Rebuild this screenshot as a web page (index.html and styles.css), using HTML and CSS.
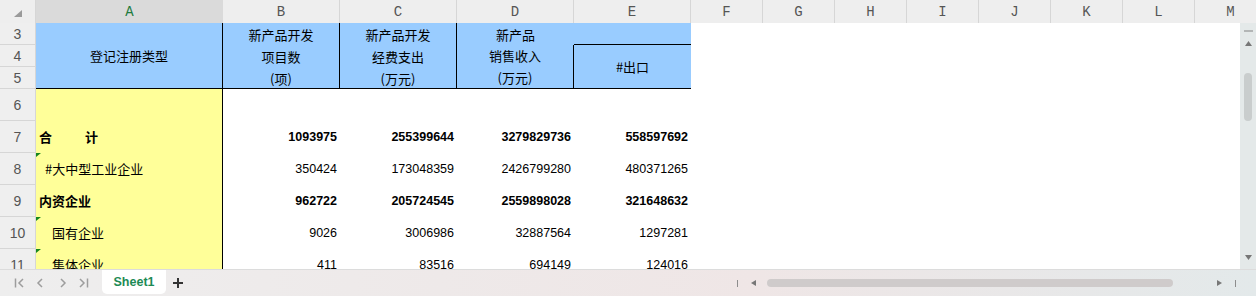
FILE: index.html
```html
<!DOCTYPE html>
<html lang="zh-CN">
<head>
  <meta charset="UTF-8">
  <title>Sheet1</title>
  <link rel="stylesheet" href="styles.css">
</head>
<body>
<div class="sheet">

  <!-- column letters -->
  <div class="colhead">
    <div class="corner">
      <svg width="8" height="7" viewBox="0 0 8 7"><polygon points="8,0 8,7 0,7" fill="#9a9a9a"/></svg>
    </div>
    <div class="ch sel">A</div>
    <div class="ch">B</div>
    <div class="ch">C</div>
    <div class="ch">D</div>
    <div class="ch">E</div>
    <div class="ch">F</div>
    <div class="ch">G</div>
    <div class="ch">H</div>
    <div class="ch">I</div>
    <div class="ch">J</div>
    <div class="ch">K</div>
    <div class="ch">L</div>
    <div class="ch">M</div>
  </div>

  <div class="main">
    <div class="cells">

      <!-- rows 3-5: table head -->
      <div class="hdrblock">
        <div class="rh r3">3</div>
        <div class="rh r4">4</div>
        <div class="rh r5">5</div>
        <div class="hc colA">登记注册类型</div>
        <div class="hc colB"><span>新产品开发</span><span>项目数</span><span>(项)</span></div>
        <div class="hc colC"><span>新产品开发</span><span>经费支出</span><span>(万元)</span></div>
        <div class="hc colD3"><span>新产品</span></div>
        <div class="hc colD45"><span>销售收入</span><span>(万元)</span></div>
        <div class="hc colE3"></div>
        <div class="hc colE45">#出口</div>
      </div>

      <div class="row">
        <div class="rh">6</div>
        <div class="ca"></div>
      </div>
      <div class="row bold">
        <div class="rh">7</div>
        <div class="ca"><span class="he">合</span>计</div>
        <div class="num">1093975</div>
        <div class="num">255399644</div>
        <div class="num">3279829736</div>
        <div class="num">558597692</div>
      </div>
      <div class="row">
        <div class="rh">8</div>
        <div class="ca mark ind1">#大中型工业企业</div>
        <div class="num">350424</div>
        <div class="num">173048359</div>
        <div class="num">2426799280</div>
        <div class="num">480371265</div>
      </div>
      <div class="row bold">
        <div class="rh">9</div>
        <div class="ca">内资企业</div>
        <div class="num">962722</div>
        <div class="num">205724545</div>
        <div class="num">2559898028</div>
        <div class="num">321648632</div>
      </div>
      <div class="row">
        <div class="rh">10</div>
        <div class="ca mark ind2">国有企业</div>
        <div class="num">9026</div>
        <div class="num">3006986</div>
        <div class="num">32887564</div>
        <div class="num">1297281</div>
      </div>
      <div class="row">
        <div class="rh">11</div>
        <div class="ca mark ind2">集体企业</div>
        <div class="num">411</div>
        <div class="num">83516</div>
        <div class="num">694149</div>
        <div class="num">124016</div>
      </div>
    </div>

    <!-- vertical scrollbar -->
    <div class="vscroll">
      <div class="dash"></div>
      <svg class="up" width="7" height="5" viewBox="0 0 7 5"><polygon points="3.5,0 7,5 0,5" fill="#777"/></svg>
      <div class="vthumb"></div>
      <svg class="down" width="7" height="5" viewBox="0 0 7 5"><polygon points="0,0 7,0 3.5,5" fill="#777"/></svg>
    </div>
  </div>

  <!-- sheet tabs + horizontal scrollbar -->
  <div class="bottombar">
    <svg class="nav" width="102" height="26" viewBox="0 0 102 26" fill="none" stroke="#9d9d9d" stroke-width="1.5">
      <line x1="15.5" y1="8.5" x2="15.5" y2="17.5"/>
      <polyline points="23,9 19,13 23,17"/>
      <polyline points="42,9 38,13 42,17"/>
      <polyline points="61,9 65,13 61,17"/>
      <polyline points="80,9 84,13 80,17"/>
      <line x1="87.5" y1="8.5" x2="87.5" y2="17.5"/>
    </svg>
    <div class="tab">Sheet1</div>
    <svg class="plus" width="10" height="10" viewBox="0 0 10 10" stroke="#333" stroke-width="2">
      <line x1="0" y1="5" x2="10" y2="5"/>
      <line x1="5" y1="0" x2="5" y2="10"/>
    </svg>
    <div class="hbar">
      <div class="tick"></div>
      <svg class="larr" width="5" height="6" viewBox="0 0 5 6"><polygon points="5,0 5,6 0,3" fill="#777"/></svg>
      <div class="hthumb"></div>
      <svg class="rarr" width="5" height="6" viewBox="0 0 5 6"><polygon points="0,0 5,3 0,6" fill="#777"/></svg>
      <div class="tick end"></div>
    </div>
  </div>

</div>
</body>
</html>
```

FILE: styles.css
```css
:root {
  --cols: 36px 187px 117px 117px 117px 117px repeat(8, 72px);
}

* {
  box-sizing: border-box;
}

body {
  margin: 0;
  width: 1256px;
  height: 296px;
  overflow: hidden;
  background: #fff;
  font-family: "Noto Sans CJK SC", sans-serif;
  color: #000;
}

.sheet {
  display: flex;
  flex-direction: column;
  height: 296px;
}

/* column header */
.colhead {
  display: grid;
  grid-template-columns: var(--cols);
  height: 23px;
  flex-shrink: 0;
  overflow: hidden;
  background: #eeeeee;
}

.corner,
.ch {
  border-right: 1px solid #d6d6d6;
  border-bottom: 1px solid #d4d4d4;
}

.corner {
  display: flex;
  align-items: center;
  justify-content: center;
  padding-top: 2px;
}

.ch {
  text-align: center;
  font-family: "Liberation Mono", monospace;
  font-size: 14px;
  line-height: 24px;
  color: #555;
}

.ch.sel {
  background: #dadada;
  color: #1e7b3e;
  border-bottom: 2px solid #3a8c2c;
  border-right: none;
}

/* cells */
.main {
  display: flex;
  height: 246px;
  flex-shrink: 0;
}

.cells {
  flex: 1;
  min-width: 0;
  overflow: hidden;
}

.hdrblock {
  display: grid;
  grid-template-columns: var(--cols);
  grid-template-rows: 22px 22px 22px;
}

.row {
  display: grid;
  grid-template-columns: var(--cols);
  height: 32px;
}

.rh {
  grid-column: 1;
  background: #efefef;
  border-right: 1px solid #d6d6d6;
  border-bottom: 1px solid #d6d6d6;
  display: flex;
  align-items: center;
  justify-content: center;
  font-family: "Liberation Sans", sans-serif;
  font-size: 14px;
  font-weight: normal;
  color: #555;
}

.r3 { grid-row: 1; }
.r4 { grid-row: 2; }
.r5 { grid-row: 3; }

.hc {
  background: #99ccff;
  display: flex;
  flex-direction: column;
  align-items: center;
  justify-content: center;
  font-size: 13px;
  line-height: 22px;
}

.colA {
  grid-column: 2;
  grid-row: 1 / 4;
  border-right: 1px solid #000;
  border-bottom: 1px solid #000;
}

.colB,
.colC {
  grid-row: 1 / 4;
  border-right: 1px solid #000;
  border-bottom: 1px solid #000;
  padding-top: 2px;
}

.colB { grid-column: 3; }
.colC { grid-column: 4; }

.colD3 {
  grid-column: 5;
  grid-row: 1;
  padding-top: 2px;
}

.colD45 {
  grid-column: 5;
  grid-row: 2 / 4;
  border-right: 1px solid #000;
  border-bottom: 1px solid #000;
}

.colE3 {
  grid-column: 6;
  grid-row: 1;
  border-bottom: 1px solid #000;
}

.colE45 {
  grid-column: 6;
  grid-row: 2 / 4;
  border-bottom: 1px solid #000;
}

.ca {
  position: relative;
  background: #ffff99;
  border-right: 1px solid #000;
  display: flex;
  align-items: center;
  padding-left: 3px;
  padding-bottom: 2px;
  font-size: 13px;
}

.ind1 { padding-left: 9px; }
.ind2 { padding-left: 16px; }

.he {
  margin-right: 33px;
}

.mark::before {
  content: "";
  position: absolute;
  left: 0;
  top: 0;
  border-top: 4px solid #14851e;
  border-right: 5px solid transparent;
}

.num {
  display: flex;
  align-items: center;
  justify-content: flex-end;
  padding-right: 3px;
  font-family: "Liberation Sans", sans-serif;
  font-size: 12.5px;
}

.bold .ca,
.bold .num {
  font-weight: bold;
}

/* vertical scrollbar */
.vscroll {
  width: 16px;
  flex-shrink: 0;
  background: #e4e9e9;
  display: flex;
  flex-direction: column;
  align-items: center;
  padding-top: 7px;
}

.dash {
  width: 9px;
  height: 2px;
  background: #b3b6b6;
}

.up {
  margin-top: 9px;
}

.vthumb {
  width: 8px;
  height: 48px;
  margin-top: 27px;
  border-radius: 4px;
  background: #c9cdcd;
}

.down {
  margin-top: auto;
  margin-bottom: 9px;
}

/* bottom bar */
.bottombar {
  display: flex;
  align-items: flex-start;
  height: 27px;
  flex-shrink: 0;
  border-top: 1px solid #dcdcdc;
  background: linear-gradient(to right, #eeeeee 0%, #eee9e9 35%, #efe6e6 60%, #e3e9ea 100%);
}

.tab {
  width: 64px;
  height: 24px;
  background: #fff;
  border-radius: 0 0 5px 5px;
  text-align: center;
  font-family: "Liberation Sans", sans-serif;
  font-weight: bold;
  font-size: 12.5px;
  line-height: 24px;
  color: #1d8a55;
}

.plus {
  margin-left: 7px;
  margin-top: 8px;
}

.hbar {
  margin-left: auto;
  padding-right: 20px;
  height: 26px;
  display: flex;
  align-items: center;
}

.tick {
  width: 1px;
  height: 7px;
  background: #8d8d8d;
}

.larr {
  margin-left: 13px;
}

.hthumb {
  width: 406px;
  height: 8px;
  margin-left: 11px;
  border-radius: 4px;
  background: #cfcbcb;
}

.rarr {
  margin-left: 44px;
}

.tick.end {
  margin-left: 13px;
}
```
